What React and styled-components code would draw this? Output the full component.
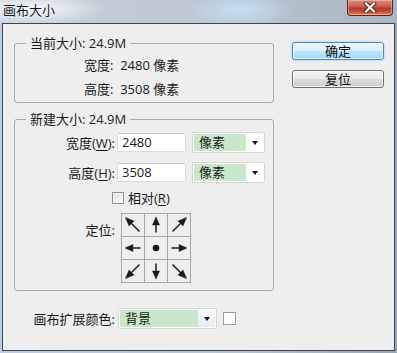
import styled, { createGlobalStyle } from 'styled-components'

const GlobalStyle = createGlobalStyle`
  html, body { margin: 0; padding: 0; background: #ffffff; }
  body {
    font-family: "Open Sans", "Noto Sans CJK SC", sans-serif;
    font-size: 13px;
    color: #1a1a1a;
  }
  * { box-sizing: border-box; }
`

const Window = styled.div`
  width: 397px;
  height: 353px;
  display: flex;
  flex-direction: column;
  background: linear-gradient(90deg, #bccfe2 0%, #b3c3d3 60%, #98a7b6 100%);
`

const TitleBar = styled.div`
  height: 23px;
  display: flex;
  align-items: flex-start;
  padding-left: 3px;
  background:
    radial-gradient(ellipse 75px 16px at 32px 9px, rgba(250, 252, 254, 0.95), rgba(250, 252, 254, 0) 100%),
    radial-gradient(ellipse 55px 18px at 240px 10px, rgba(200, 226, 248, 0.9), rgba(200, 226, 248, 0) 100%),
    linear-gradient(90deg, #c7d1db 0%, #bcc7d2 50%, #a9b5c1 100%);
`

const Title = styled.span`
  font-family: "Noto Sans CJK SC", sans-serif;
  font-size: 13px;
  line-height: 20px;
  color: #1c1c1c;
`

const CloseButton = styled.div`
  margin-left: auto;
  margin-right: 4px;
  width: 46px;
  height: 16px;
  border: 1px solid #5e231c;
  border-top: none;
  border-radius: 0 0 4px 4px;
  background: linear-gradient(180deg, #d88a7c 0%, #c96553 40%, #b8352a 55%, #c9523d 80%, #e08a62 100%);
  box-shadow: inset 0 0 0 1px rgba(255, 210, 200, 0.45);
  display: flex;
  align-items: center;
  justify-content: center;
`

const Client = styled.div`
  flex: 1;
  margin: 0 2px 2px 2px;
  border: 1px solid #3b4651;
  background: #eeeeee;
  padding: 10px 0 0 11px;
  display: flex;
  flex-direction: column;
`

const Top = styled.div`
  display: flex;
  align-items: flex-start;
`

const LeftCol = styled.div`
  width: 260px;
  display: flex;
  flex-direction: column;
  gap: 7px;
`

const RightCol = styled.div`
  margin-left: 18px;
  padding-top: 8px;
  display: flex;
  flex-direction: column;
  gap: 10px;
`

const Group = styled.fieldset`
  margin: 0;
  padding: ${p => p.$pad};
  border: 1px solid #a9a9a9;
  border-radius: 3px;
  min-width: 0;
`

const Legend = styled.legend`
  margin-left: 11px;
  padding: 0 4px;
  line-height: 18px;
  font-size: 13px;
`

const ReadRow = styled.div`
  height: 24px;
  line-height: 24px;
  padding-left: 69px;
  white-space: pre;
`

const FormRow = styled.div`
  display: flex;
  align-items: center;
  height: 21px;
  margin-top: ${p => p.$mt || 0}px;
`

const Label = styled.span`
  width: 100px;
  text-align: right;
  white-space: nowrap;
  line-height: 18px;
  align-self: ${p => (p.$top ? 'flex-start' : 'center')};
  margin-top: ${p => (p.$top ? '8px' : '0')};
`

const Key = styled.span`
  text-decoration: underline;
  text-underline-offset: 2px;
`

const TextBox = styled.div`
  width: 69px;
  height: 19px;
  margin-left: 2px;
  padding-left: 4px;
  background: #ffffff;
  border: 1px solid #dcdcdc;
  border-top-color: #cacaca;
  border-radius: 2px;
  line-height: 17px;
`

const Select = styled.div`
  width: ${p => p.$w}px;
  height: 21px;
  margin-left: ${p => p.$ml}px;
  display: flex;
  background: #ffffff;
  border: 1px solid #d6d6d6;
  border-radius: 2px;
  padding: 1px;
`

const SelectValue = styled.div`
  flex: 1;
  background: #cbe7cb;
  padding-left: 5px;
  line-height: 17px;
`

const SelectArrow = styled.div`
  width: 17px;
  display: flex;
  align-items: center;
  justify-content: center;
  background: ${p => (p.$lit ? 'linear-gradient(180deg, #f4f9fd 0%, #e3eef8 100%)' : '#ffffff')};
  &::after {
    content: '';
    border-left: 3.5px solid transparent;
    border-right: 3.5px solid transparent;
    border-top: 4px solid #111111;
    margin-top: 1px;
  }
`

const CheckRow = styled.label`
  display: flex;
  align-items: center;
  height: 14px;
  margin-top: 8px;
  padding-left: 97px;
  gap: 4px;
  line-height: 14px;
`

const CheckBox = styled.span`
  width: 12px;
  height: 12px;
  border: 1px solid #8f8f8f;
  background: linear-gradient(135deg, #dcdcdc 0%, #f4f4f4 70%, #ffffff 100%);
  box-shadow: inset 0 0 0 1px #f6f6f6;
`

const AnchorRow = styled.div`
  display: flex;
  margin-top: 8px;
`

const AnchorGrid = styled.div`
  margin-left: 6px;
  display: grid;
  grid-template-columns: repeat(3, 22px);
  grid-auto-rows: 22px;
  gap: 1px;
  padding: 1px;
  background: #a6a6a6;
`

const Cell = styled.div`
  background: #eeeeee;
  display: flex;
  align-items: center;
  justify-content: center;
`

const ArrowSvg = styled.svg`
  transform: rotate(${p => p.$rot}deg);
`

const BottomRow = styled.div`
  display: flex;
  align-items: center;
  margin-top: 17px;
  padding-left: 1px;
`

const Swatch = styled.div`
  width: 13px;
  height: 13px;
  margin-left: 6px;
  background: #ffffff;
  border: 1px solid #9d9d9d;
`

const Button = styled.div`
  width: 92px;
  height: 18px;
  border-radius: 3px;
  text-align: center;
  line-height: 16px;
  color: #111111;
  border: 1px solid ${p => (p.$primary ? '#3a8ccb' : '#707070')};
  background: ${p =>
    p.$primary
      ? 'linear-gradient(180deg, #eaf6fd 0%, #d9f0fc 50%, #bee6fd 50%, #a7d9f5 100%)'
      : 'linear-gradient(180deg, #f2f2f2 0%, #ebebeb 50%, #dddddd 50%, #cfcfcf 100%)'};
  box-shadow: ${p =>
    p.$primary
      ? 'inset 0 0 0 1px rgba(255,255,255,0.7), 0 0 2px rgba(60,150,220,0.6)'
      : 'inset 0 0 0 1px rgba(255,255,255,0.7)'};
`

// one arrow shape, turned by a multiple of 90deg for each anchor cell
const Arrow = ({ diag, rot }) => (
  <ArrowSvg width="22" height="22" viewBox="0 0 22 22" $rot={rot}>
    {diag ? (
      <g fill="#1a1a1a" stroke="#1a1a1a">
        <line x1="4.5" y1="17.5" x2="13" y2="9" strokeWidth="1.5" />
        <polygon points="18.5,3.5 10,7 15,12" strokeWidth="0.5" />
      </g>
    ) : (
      <g fill="#1a1a1a" stroke="#1a1a1a">
        <line x1="11" y1="18.5" x2="11" y2="10" strokeWidth="1.5" />
        <polygon points="11,3 7.5,11 14.5,11" strokeWidth="0.5" />
      </g>
    )}
  </ArrowSvg>
)

const anchors = [
  { diag: true, rot: -90 },
  { diag: false, rot: 0 },
  { diag: true, rot: 0 },
  { diag: false, rot: 270 },
  { dot: true },
  { diag: false, rot: 90 },
  { diag: true, rot: 180 },
  { diag: false, rot: 180 },
  { diag: true, rot: 90 }
]

export default function App() {
  return (
    <>
      <GlobalStyle />
      <Window>
        <TitleBar>
          <Title>画布大小</Title>
          <CloseButton>
            <svg width="14" height="11" viewBox="0 0 14 11">
              <path d="M3 1.5 L11 9.5 M11 1.5 L3 9.5" stroke="#4a1a14" strokeWidth="4" strokeLinecap="square" />
              <path d="M3 1.5 L11 9.5 M11 1.5 L3 9.5" stroke="#ffffff" strokeWidth="2.2" strokeLinecap="square" />
            </svg>
          </CloseButton>
        </TitleBar>
        <Client>
          <Top>
            <LeftCol>
              <Group $pad="1px 0 1px 0">
                <Legend>当前大小: 24.9M</Legend>
                <ReadRow>宽度:  2480 像素</ReadRow>
                <ReadRow>高度:  3508 像素</ReadRow>
              </Group>
              <Group $pad="4px 0 7px 0">
                <Legend>新建大小: 24.9M</Legend>
                <FormRow>
                  <Label>宽度(<Key>W</Key>):</Label>
                  <TextBox>2480</TextBox>
                  <Select $w={73} $ml={6}>
                    <SelectValue>像素</SelectValue>
                    <SelectArrow />
                  </Select>
                </FormRow>
                <FormRow $mt={9}>
                  <Label>高度(<Key>H</Key>):</Label>
                  <TextBox>3508</TextBox>
                  <Select $w={73} $ml={6}>
                    <SelectValue>像素</SelectValue>
                    <SelectArrow />
                  </Select>
                </FormRow>
                <CheckRow>
                  <CheckBox />
                  <span>相对(<Key>R</Key>)</span>
                </CheckRow>
                <AnchorRow>
                  <Label $top>定位:</Label>
                  <AnchorGrid>
                    {anchors.map((a, i) => (
                      <Cell key={i}>
                        {a.dot ? (
                          <svg width="22" height="22" viewBox="0 0 22 22">
                            <circle cx="11" cy="11" r="3.3" fill="#1a1a1a" />
                          </svg>
                        ) : (
                          <Arrow diag={a.diag} rot={a.rot} />
                        )}
                      </Cell>
                    ))}
                  </AnchorGrid>
                </AnchorRow>
              </Group>
            </LeftCol>
            <RightCol>
              <Button $primary>确定</Button>
              <Button>复位</Button>
            </RightCol>
          </Top>
          <BottomRow>
            <Label>画布扩展颜色:</Label>
            <Select $w={99} $ml={3}>
              <SelectValue>背景</SelectValue>
              <SelectArrow $lit />
            </Select>
            <Swatch />
          </BottomRow>
        </Client>
      </Window>
    </>
  )
}
